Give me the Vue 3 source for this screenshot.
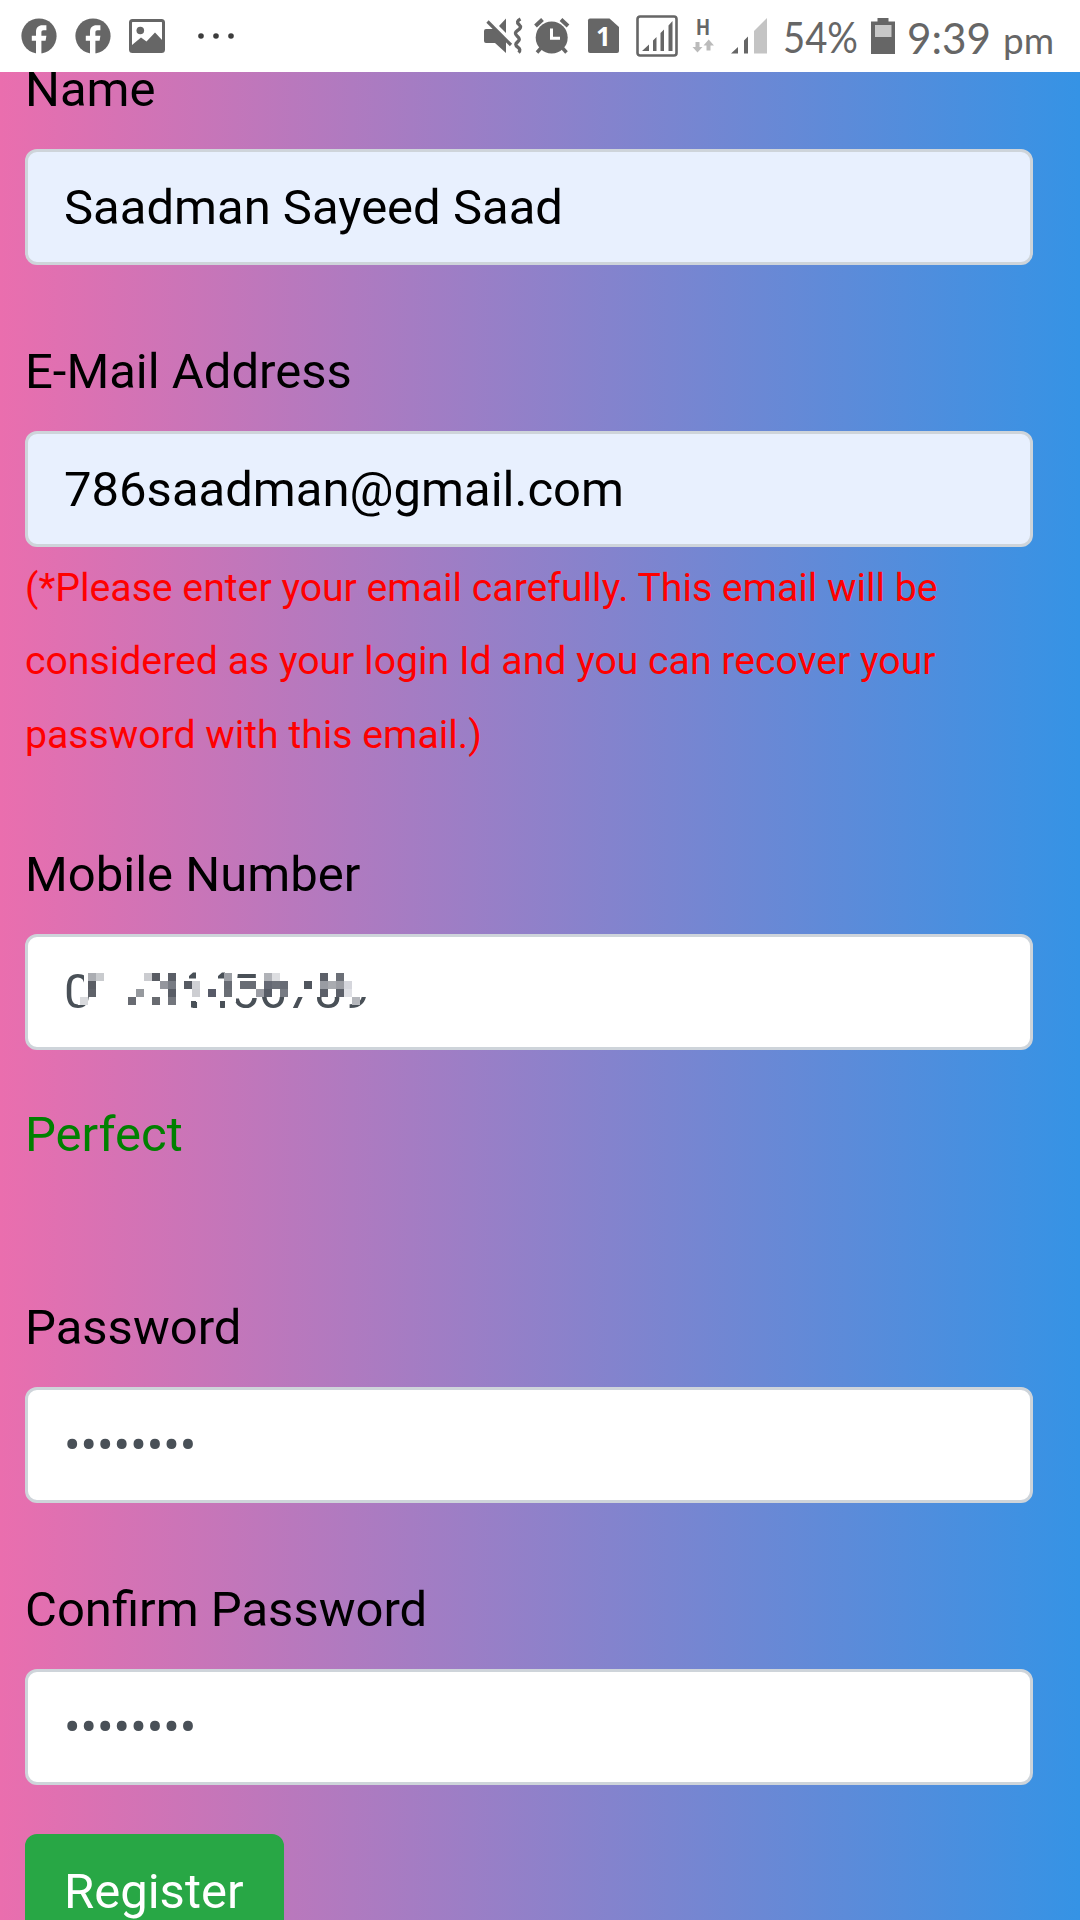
<script setup>
const pixels = [
  [1, 0, '#abadb2'], [2, 0, '#c9cbce'], [1, 1, '#5a5d64'], [1, 2, '#5f6269'], [0, 3, '#d9dadd'],
  [6, 3, '#686b72'], [7, 2, '#96999e'], [8, 0, '#cbccd0'], [9, 0, '#595c63'], [9, 3, '#686b70'],
  [10, 1, '#94969d'], [11, 0, '#5b5f67'], [11, 1, '#777b83'], [11, 2, '#585c65'], [11, 3, '#73767d'],
  [13, 1, '#565a62'], [14, 1, '#d0d1d5'], [14, 2, '#cdced2'], [16, 2, '#575a68'],
  [18, 0, '#9da0a6'], [18, 1, '#676b73'], [18, 2, '#6a6e75'], [20, 1, '#686c74'], [21, 1, '#686c74'],
  [22, 2, '#9c9ea5'], [23, 0, '#b0b2b7'], [23, 1, '#646873'], [23, 2, '#575c66'],
  [24, 0, '#dddee1'], [24, 1, '#6d717a'], [25, 1, '#686c75'], [25, 2, '#777b83'],
  [28, 1, '#50555d'], [30, 0, '#5c6069'], [30, 1, '#999ca3'], [30, 2, '#5c6069'], [31, 1, '#a9abb0'],
  [32, 0, '#6b6f77'], [32, 1, '#9b9da3'], [32, 2, '#5c6069'], [33, 1, '#d5d6dc'], [33, 2, '#dfe0e5'], [34, 3, '#b5b7bc']
]
</script>

<template>
  <div class="screen">
    <header class="status">
      <svg v-for="n in 2" :key="n" class="fb" width="36" height="36" viewBox="0 0 36 36">
        <circle cx="18" cy="18" r="17.6" fill="#666" />
        <path d="M15 36V22.8h-4.2v-5H15v-3.6c0-5 2.6-7 6.4-7h4v5h-2.8c-1.6 0-2.2.7-2.2 2.2v3.4h5l-.8 5h-4.2V36z" fill="#fff" />
      </svg>
      <svg class="photo" width="36" height="34" viewBox="0 0 36 34">
        <rect x="1.5" y="1.5" width="33" height="31" rx="2" fill="#fff" stroke="#666" stroke-width="3" />
        <circle cx="11.3" cy="11.5" r="3.8" fill="#666" />
        <path d="M3 26l9-7.6 5.5 4L26 13.600l8 8.500V32H3z" fill="#666" />
      </svg>
      <svg class="more" width="40" height="8" viewBox="0 0 40 8" fill="#3c3c3c">
        <circle cx="5" cy="4" r="2.8" /><circle cx="20" cy="4" r="2.8" /><circle cx="35" cy="4" r="2.8" />
      </svg>
      <svg class="mute" width="38" height="36" viewBox="0 0 38 36">
        <path d="M0 13q0-2 2-2h8l12 12v12L11 25H2q-2 0-2-2zM15 8l7-7.500V15z" fill="#666" />
        <path d="M3.500 3.500L27 27" stroke="#666" stroke-width="3.200" />
        <path d="M36.500 1q-5 2.500-1.500 5.500t-1.500 6q-4 2.500-.2 5.700t.2 5.800q-3.500 2.500.2 5.200t.8 5.300" fill="none" stroke="#666" stroke-width="3.400" />
      </svg>
      <svg class="alarm" width="36" height="36" viewBox="0 0 36 36">
        <circle cx="17.700" cy="19.500" r="16" fill="#666" />
        <path d="M1.500 8L8.500 1.500M27 1.500L34 8" stroke="#666" stroke-width="4" />
        <path d="M7 30l-4 4.500M28.500 30l4 4.500" stroke="#666" stroke-width="3.500" />
        <path d="M17.500 10.500v9.700h8.500" fill="none" stroke="#fff" stroke-width="3" />
      </svg>
      <svg class="sim" width="31" height="36" viewBox="0 0 31 36">
        <path d="M2 .5h19.500L31 9v24q0 2-2 2H2q-2 0-2-2v-30.500q0-2 2-2z" fill="#666" />
        <text x="8" y="28" font-family="Open Sans, sans-serif" font-weight="700" font-size="26" fill="#fff">1</text>
      </svg>
      <svg class="boxed" width="42" height="42" viewBox="0 0 42 42">
        <rect x="1.500" y="1.500" width="39" height="39" rx="2.500" fill="#fff" stroke="#666" stroke-width="2.600" />
        <path d="M6 36l7-6.500V36zM17 36V25.500l3.500-3.500v14zM24.500 36V18l3.500-3.500V36zM32.500 36V10.500L36.500 6v30z" fill="#666" />
      </svg>
      <svg class="data" width="22" height="36" viewBox="0 0 22 36">
        <text x="4.300" y="17" textLength="13.500" lengthAdjust="spacingAndGlyphs" font-family="Roboto, sans-serif" font-weight="700" font-size="22" fill="#666">H</text>
        <path d="M3.500 24h4v5h3l-5 5.500L.5 29h3zM14.500 32.500h4v-5H22l-5.300-6-5.200 6h3z" fill="#bbb" />
      </svg>
      <svg class="signal" width="36" height="36" viewBox="0 0 36 36">
        <path d="M0 35.500l7-6.500v6.500zM13 35.500V22.500l4-4v17z" fill="#666" />
        <path d="M23 35.500V13L36 0v35.500z" fill="#c4c4c4" />
      </svg>
      <svg class="percent" width="76" height="50" viewBox="0 0 76 50">
        <text x="0" y="42" textLength="75" lengthAdjust="spacingAndGlyphs" font-family="Lato, sans-serif" font-size="42" fill="#666">54%</text>
      </svg>
      <svg class="battery" width="24" height="36" viewBox="0 0 24 36">
        <path d="M6.500 0h11v3.500H24V36H0V3.500h6.500z" fill="#666" />
        <path d="M4 7h16.500v12H4z" fill="#c7c7c7" />
      </svg>
      <svg class="clock" width="150" height="60" viewBox="0 0 150 60">
        <text x="0" y="48" textLength="84" lengthAdjust="spacingAndGlyphs" font-family="Lato, sans-serif" font-size="43" fill="#666">9:39</text>
        <text x="96" y="47.500" textLength="51" lengthAdjust="spacingAndGlyphs" font-family="Lato, sans-serif" font-size="37" fill="#666">pm</text>
      </svg>
    </header>

    <form class="form" @submit.prevent>
      <label class="first">Name</label>
      <div class="control filled">Saadman Sayeed Saad</div>

      <label>E-Mail Address</label>
      <div class="control filled">786saadman@gmail.com</div>
      <p class="hint">(*Please enter your email carefully. This email will be<br>considered as your login Id and you can recover your<br>password with this email.)</p>

      <label class="mobile">Mobile Number</label>
      <div class="control">
        <svg width="316" height="60" viewBox="62 962 316 60">
          <text x="64" y="1008.500" textLength="306" lengthAdjust="spacingAndGlyphs" font-family="Roboto, sans-serif" font-size="49" fill="#495057">01234456789</text>
          <path d="M84 970H236V1003H184V1011H91V998H84zM236 979H260V999H236zM258 970H374V998H258zM78 998h10v8H78z" fill="#fff" />
          <path d="M189 977l4-3.500h3v6h-7zM218 977l4-3.500h3v6h-7z" fill="#495057" />
          <path d="M191 1002h5v6.500h-5zM220 1002h5v6.500h-5z" fill="#495057" />
          <rect v-for="([c, r, color], i) in pixels" :key="i" :x="80 + c * 8" :y="974 + r * 8" width="8" height="8" :fill="color" />
        </svg>
      </div>
      <p class="valid">Perfect</p>

      <label class="pass">Password</label>
      <div class="control">••••••••</div>

      <label>Confirm Password</label>
      <div class="control">••••••••</div>

      <button type="submit">Register</button>
    </form>
  </div>
</template>

<style>
body {
  margin: 0;
  overflow: hidden;
}
</style>

<style scoped>
.screen {
  width: 1080px;
  height: 1920px;
  overflow: hidden;
  display: flex;
  flex-direction: column;
  background: linear-gradient(to right, #ea6eae, #3593e5);
  font-family: Roboto, sans-serif;
  font-size: 49px;
  line-height: 73.5px;
  color: #000;
}
.status {
  flex: none;
  height: 72px;
  background: #fff;
  display: flex;
  align-items: center;
  padding-left: 21px;
  box-sizing: border-box;
  position: relative;
  z-index: 1;
}
.status svg {
  flex: none;
  display: block;
  overflow: visible;
}
.fb + .fb { margin-left: 18px; }
.photo { margin-left: 18px; }
.more { margin-left: 31px; }
.mute { margin-left: 248px; }
.alarm { margin-left: 12px; }
.sim { margin-left: 18px; }
.boxed { margin-left: 17px; }
.data { margin-left: 14px; }
.signal { margin-left: 17px; }
.percent { margin-left: 16px; }
.battery { margin-left: 12px; }
.clock { margin-left: 12px; }
.form {
  flex: none;
  display: flex;
  flex-direction: column;
  align-items: flex-start;
  padding: 0 47px 0 25px;
}
label {
  display: block;
  height: 74px;
  margin: 70px 0 22px;
}
label.first {
  margin-top: -19px;
}
label.mobile {
  margin-top: 66px;
}
label.pass {
  margin-top: 119.5px;
}
.control {
  box-sizing: border-box;
  width: 1008px;
  height: 116px;
  display: flex;
  align-items: center;
  padding: 2px 36px 0;
  border: 3px solid #ced4da;
  border-radius: 12px;
  background: #fff;
  color: #495057;
}
.control svg {
  display: block;
  margin: -4px 0 0 -2px;
}
.filled {
  background: #e8f0fe;
  color: #000;
}
.hint {
  margin: 4.5px 0 0;
  font-size: 39.200px;
  white-space: nowrap;
  color: #f00;
}
.valid {
  margin: 48px 0 0;
  color: green;
}
button {
  height: 117px;
  margin-top: 49px;
  padding: 0 37px 2px 36px;
  border: 3px solid #28a745;
  border-radius: 12px;
  background: #28a745;
  color: #fff;
  font: inherit;
}
</style>
